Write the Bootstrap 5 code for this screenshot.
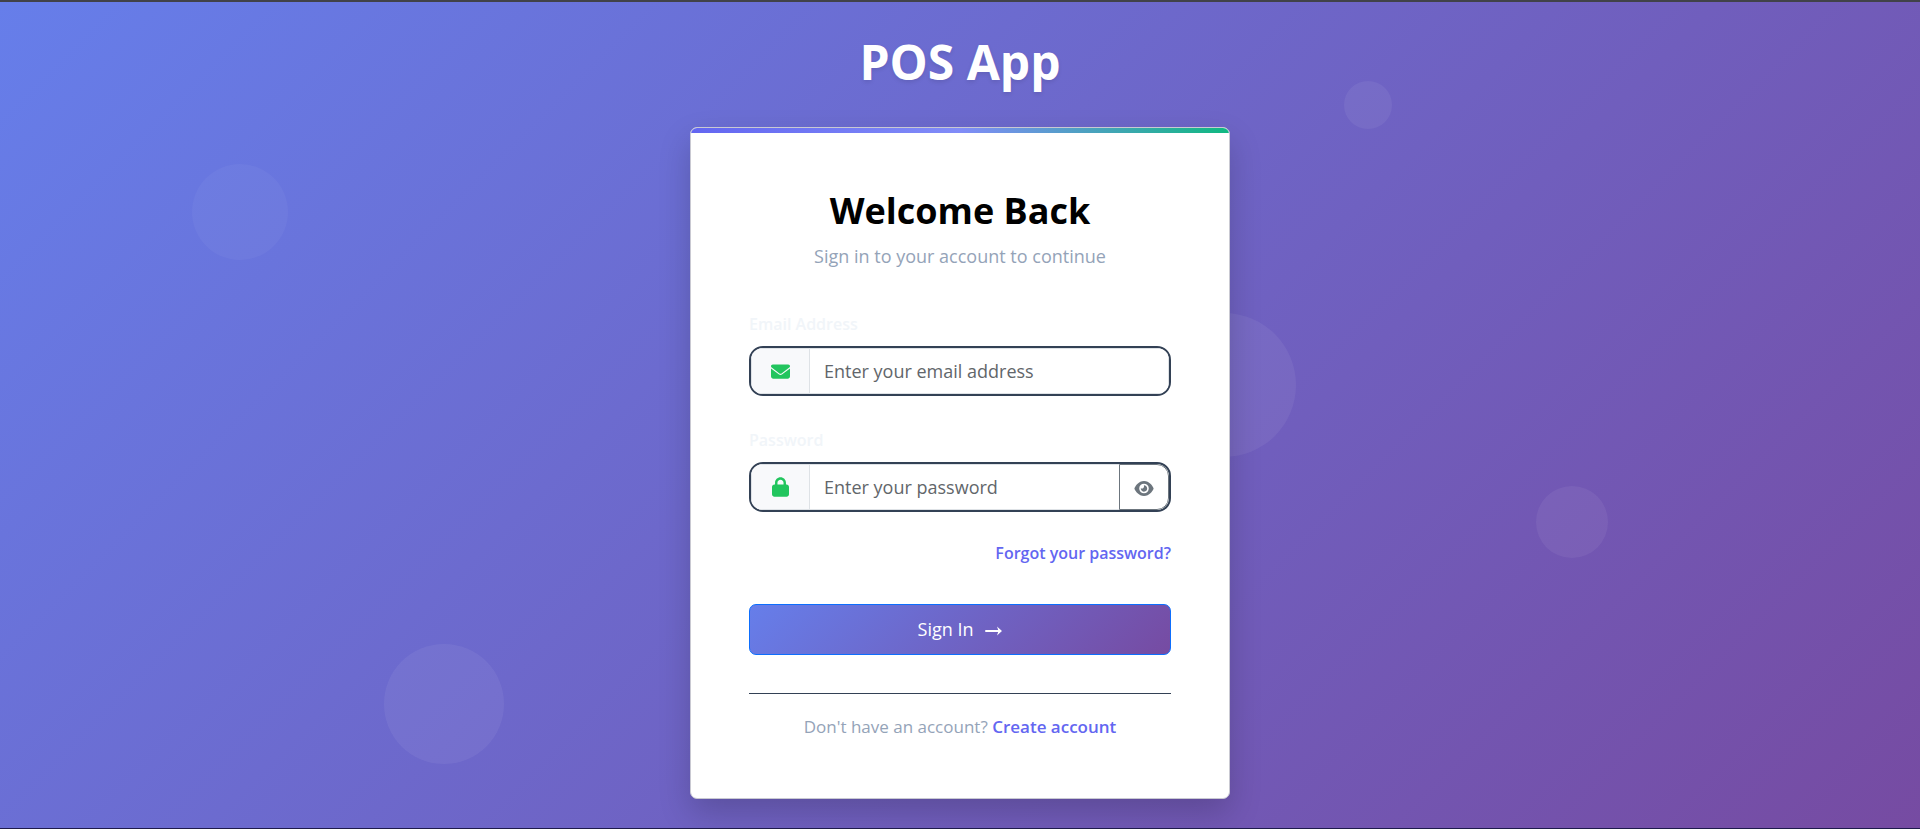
<!DOCTYPE html>
<html lang="en">
<head>
<meta charset="utf-8">
<meta name="viewport" content="width=device-width, initial-scale=1">
<title>POS App</title>
<link href="https://cdn.jsdelivr.net/npm/bootstrap@5.3.0/dist/css/bootstrap.min.css" rel="stylesheet">
<style>
  body { font-family: "Open Sans", "Noto Sans", sans-serif; font-size: 18px; line-height: 26px; }
  .auth-page {
    background: linear-gradient(135deg, #667eea 0%, #764ba2 100%);
    border-top: 2px solid #414249;
    border-bottom: 1px solid #1e1b4b;
  }
  /* decorative circles floating on the background */
  .bubble { position: absolute; border-radius: 50%; background: rgba(255, 255, 255, .06); }
  .bubble-a { width: 96px; height: 96px; left: 10%; top: 19.6%; background: rgba(255, 255, 255, .04); }
  .bubble-b { width: 144px; height: 144px; left: 60%; top: 37.6%; }
  .bubble-c { width: 72px; height: 72px; left: 80%; top: 58.6%; }
  .bubble-d { width: 120px; height: 120px; left: 20%; top: 77.7%; }
  .bubble-e { width: 48px; height: 48px; left: 70%; top: 9.6%; }
  .auth-column { max-width: 540px; }
  .brand-title { font-size: 48px; line-height: 58px; text-shadow: 0 2px 4px rgba(0, 0, 0, .1); margin: 31px 0 36px; }
  .auth-card { border-radius: 7px; border-color: #c9c9d2; box-shadow: 0 14px 32px rgba(0, 0, 0, .18); }
  .card-stripe { height: 5px; background: linear-gradient(90deg, #6366f1 0%, #818cf8 50%, #10b981 100%); }
  .auth-body { padding: 55px 58px 58px; }
  .auth-intro { margin-bottom: 43px; }
  .auth-heading { font-size: 36px; line-height: 46px; color: #000; margin-bottom: 9px; }
  .muted-text { color: #94a3b8; }
  .field-block + .field-block { margin-top: 32px; }
  .field-label { font-size: 16px; line-height: 24px; font-weight: 600; color: #f1f5f9; margin-bottom: 10px; }
  .field-group { border: 2px solid #334155; border-radius: 14px; overflow: hidden; height: 50px; }
  .field-group .input-group-text { width: 59px; background: #f8f9fb; border-color: #dee2e6; color: #22c55e; }
  .field-group .form-control { font-size: 18px; padding: 6px 14px; border-color: #dee2e6; }
  .field-group .form-control::placeholder { color: #62666a; }
  .eye-toggle { width: 50px; border-radius: 0 12px 12px 0; }
  .auth-link { color: #6366f1; font-weight: 600; text-decoration: none; }
  .forgot-row { font-size: 16px; margin: 28px 0 38px; }
  .submit-button { height: 51px; border-radius: 7px; border-color: #0d6efd; font-size: 18px; background: linear-gradient(135deg, #667eea 0%, #764ba2 100%); margin-bottom: 38px; gap: 12px; }
  .signup-note { border-top: 1px solid #334155; padding-top: 20px; font-size: 17px; }
</style>
</head>
<body>
<main class="auth-page position-relative overflow-hidden min-vh-100 d-flex flex-column align-items-center">
  <div class="bubble bubble-a"></div>
  <div class="bubble bubble-b"></div>
  <div class="bubble bubble-c"></div>
  <div class="bubble bubble-d"></div>
  <div class="bubble bubble-e"></div>

  <div class="auth-column w-100 position-relative">
    <h1 class="brand-title text-center text-white fw-bold">POS App</h1>
    <section class="card auth-card overflow-hidden">
      <div class="card-stripe"></div>
      <div class="auth-body">
        <div class="auth-intro text-center">
          <h2 class="auth-heading fw-bold">Welcome Back</h2>
          <p class="muted-text mb-0">Sign in to your account to continue</p>
        </div>
        <form>
          <div class="field-block">
            <label class="field-label d-block" for="email">Email Address</label>
            <div class="input-group field-group">
              <span class="input-group-text justify-content-center">
                <svg width="19" height="19" viewBox="0 0 512 512" fill="currentColor" aria-hidden="true"><path d="M48 64C21.500 64 0 85.500 0 112c0 15.100 7.100 29.300 19.200 38.400L236.800 313.600c11.400 8.500 27 8.500 38.400 0L492.800 150.400c12.100-9.100 19.200-23.300 19.200-38.400 0-26.500-21.500-48-48-48H48zM0 176V384c0 35.300 28.700 64 64 64H448c35.300 0 64-28.700 64-64V176L294.400 339.200c-22.800 17.100-54 17.100-76.800 0L0 176z"/></svg>
              </span>
              <input type="email" class="form-control" id="email" placeholder="Enter your email address">
            </div>
          </div>

          <div class="field-block">
            <label class="field-label d-block" for="password">Password</label>
            <div class="input-group field-group">
              <span class="input-group-text justify-content-center">
                <svg width="17" height="20" viewBox="0 0 448 512" fill="currentColor" aria-hidden="true"><path d="M144 144v48H304V144c0-44.200-35.800-80-80-80s-80 35.800-80 80zM80 192V144C80 64.500 144.500 0 224 0s144 64.500 144 144v48h16c35.300 0 64 28.700 64 64V448c0 35.300-28.700 64-64 64H64c-35.300 0-64-28.700-64-64V256c0-35.300 28.700-64 64-64H80z"/></svg>
              </span>
              <input type="password" class="form-control" id="password" placeholder="Enter your password">
              <button type="button" class="btn btn-outline-secondary eye-toggle p-0" aria-label="Show password">
                <svg width="20" height="17" viewBox="0 0 576 512" fill="currentColor" aria-hidden="true"><path d="M288 32c-80.800 0-145.500 36.800-192.600 80.600C48.600 156 17.300 208 2.500 243.700c-3.300 7.900-3.300 16.700 0 24.600C17.300 304 48.600 356 95.400 399.400 142.500 443.200 207.200 480 288 480s145.500-36.800 192.600-80.600c46.800-43.500 78.100-95.400 93-131.100 3.300-7.900 3.300-16.700 0-24.600-14.900-35.700-46.200-87.700-93-131.100C433.500 68.800 368.800 32 288 32zM144 256a144 144 0 1 1 288 0 144 144 0 1 1-288 0zm144-64c0 35.300-28.700 64-64 64-7.100 0-13.900-1.200-20.300-3.300-5.500-1.800-11.900 1.600-11.700 7.400.3 6.900 1.300 13.800 3.200 20.700 13.700 51.200 66.400 81.600 117.600 67.900s81.600-66.400 67.900-117.600c-11.100-41.500-47.800-69.400-88.600-71.100-5.800-.2-9.200 6.100-7.400 11.700 2.100 6.400 3.300 13.200 3.300 20.300z"/></svg>
              </button>
            </div>
          </div>

          <div class="forgot-row text-end"><a href="#" class="auth-link">Forgot your password?</a></div>
          <button type="submit" class="btn btn-primary submit-button w-100 d-flex align-items-center justify-content-center">
            <span>Sign In</span>
            <svg width="17" height="16" viewBox="0 0 17 16" aria-hidden="true"><path d="M1 9H14" fill="none" stroke="currentColor" stroke-width="2" stroke-linecap="round"/><path d="M12 4.500L17 9L12 13.500L13.500 9Z" fill="currentColor"/></svg>
          </button>
        </form>
        <div class="signup-note text-center muted-text">Don't have an account? <a href="#" class="auth-link">Create account</a></div>
      </div>
    </section>
  </div>
</main>
<script src="https://cdn.jsdelivr.net/npm/bootstrap@5.3.0/dist/js/bootstrap.bundle.min.js"></script>
</body>
</html>
